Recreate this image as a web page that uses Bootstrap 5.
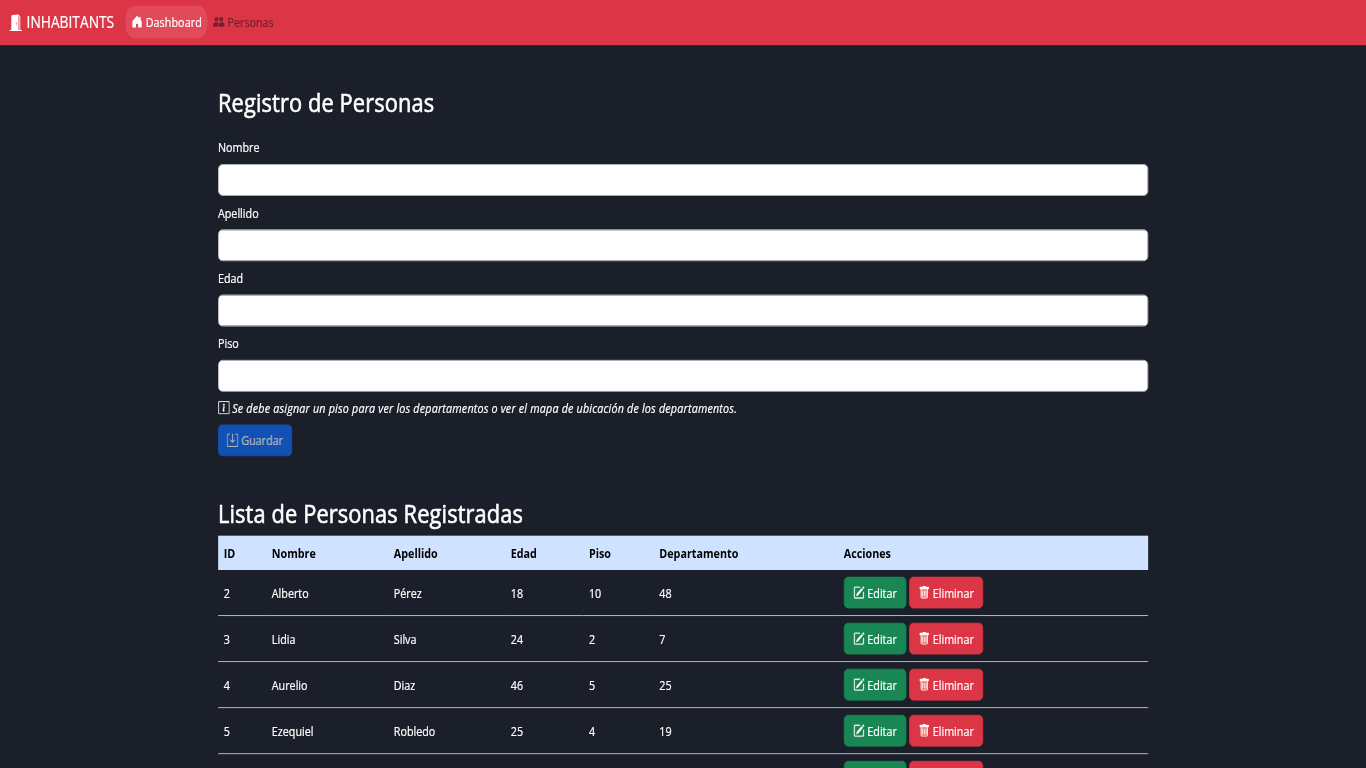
<!DOCTYPE html>
<html lang="es">
<head>
<meta charset="utf-8">
<title>Inhabitants</title>
<link href="https://cdn.jsdelivr.net/npm/bootstrap@5.3.0/dist/css/bootstrap.min.css" rel="stylesheet">
<style>
html,body{height:100%;overflow:hidden;background:#1b1f29}
body{font-family:"Open Sans","Noto Sans",sans-serif;color:#fff}
.viewport{width:100vw;height:100vh;overflow:hidden;contain:strict}
.stage{width:1903.5px;height:917.5px;overflow:hidden;transform:scale(.7176,.837);transform-origin:0 0;font-size:15px;line-height:24px;-webkit-text-stroke:.25px currentColor}
.topbar{height:53.5px;padding:0;background:#dc3545}
.topbar .navbar-brand{font-size:19.200px;margin-right:16px;padding:0;color:#fff}
.topbar .nav-link{padding:8px;line-height:22.600px;color:#74202e}
.topbar .nav-link.active{background:#e04a59;color:#fff;border-radius:14px}
.topbar .nav-link .t{letter-spacing:-.05px}
.topbar .nav-link.active .t{letter-spacing:.1px}
.page-box{width:1320px;max-width:1320px}
h2{font-size:30.400px;line-height:38.4px;font-weight:500;-webkit-text-stroke:.7px currentColor;letter-spacing:.17px}
.title-form{margin:50px 0 22px}
.title-list{margin:49.600px 0 6.400px}
.form-control{height:38px}
.form-group{margin-bottom:7.900px}
.note .t{letter-spacing:.245px}
.stage .btn{font-size:15px;line-height:24px;padding:6px 0;white-space:nowrap}
.save,.del{width:103px}
.edit{width:87px}
.acts{gap:4.200px}
svg{width:16px;height:16px;fill:currentColor;vertical-align:-2px}
.topbar .navbar-brand svg{width:20px;height:20px;vertical-align:-3px}
.people-table{table-layout:fixed;color:#fff;margin:0;background:linear-gradient(#cfe2ff 41px,transparent 41px)}
.people-table>:not(caption)>*>*{padding:8px;background:transparent;color:#fff;border-bottom:1.6px solid #d2d5da;box-shadow:none}
.people-table>thead>tr>th{color:#000;border:0;height:41px;-webkit-text-stroke:0}
.people-table td{height:55px;vertical-align:middle}
.w-id{width:67px}.w-name{width:170px}.w-last{width:163px}.w-age{width:109px}.w-floor{width:98px}.w-dept{width:257px}
.t{white-space:nowrap}
</style>
</head>
<body>
<div class="viewport">
<div class="stage">
<nav class="navbar navbar-expand topbar">
 <div class="container-fluid justify-content-start">
  <a class="navbar-brand" href="#"><svg viewBox="0 0 16 16"><path d="M1.5 15a.5.5 0 0 0 0 1h13a.5.5 0 0 0 0-1H13V2.5A1.5 1.5 0 0 0 11.5 1H11V.5a.5.5 0 0 0-.57-.495l-7 1A.5.5 0 0 0 3 1.5V15H1.5zM11 2h.5a.5.5 0 0 1 .5.5V15h-1V2zm-2.5 8c-.276 0-.5-.448-.5-1s.224-1 .5-1 .5.448.5 1-.224 1-.5 1z"/></svg> <span class="t">INHABITANTS</span></a>
  <div class="navbar-nav">
   <a class="nav-link active" href="#"><svg viewBox="0 0 16 16"><path d="M6.5 14.5v-3.505c0-.245.25-.495.5-.495h2c.25 0 .5.25.5.5v3.5a.5.5 0 0 0 .5.5h4a.5.5 0 0 0 .5-.5v-7a.5.5 0 0 0-.146-.354L13 5.793V2.5a.5.5 0 0 0-.5-.5h-1a.5.5 0 0 0-.5.5v1.293L8.354 1.146a.5.5 0 0 0-.708 0l-6 6A.5.5 0 0 0 1.5 7.5v7a.5.5 0 0 0 .5.5h4a.5.5 0 0 0 .5-.5z"/></svg> <span class="t">Dashboard</span></a>
   <a class="nav-link" href="#"><svg viewBox="0 0 16 16"><circle cx="4.700" cy="5" r="2.700"/><circle cx="11.300" cy="5" r="2.700"/><path d="M0 14v-2c0-2 1.600-3.300 3.500-3.300h2.400c.8 0 1.400.3 1.900.8C6.700 10.500 6.200 12 6.200 14zM7.200 14c0-3.300 1.700-5.300 4-5.300h1.300c2 0 3.500 1.500 3.500 3.400V14z"/></svg> <span class="t">Personas</span></a>
  </div>
 </div>
</nav>
<main class="container page-box">
 <h2 class="title-form"><span class="t">Registro de Personas</span></h2>
 <form>
  <div class="form-group"><label class="d-block mb-2" for="nombre">Nombre</label><input class="form-control" id="nombre"></div>
  <div class="form-group"><label class="d-block mb-2" for="apellido">Apellido</label><input class="form-control" id="apellido"></div>
  <div class="form-group"><label class="d-block mb-2" for="edad">Edad</label><input class="form-control" id="edad"></div>
  <div class="form-group"><label class="d-block mb-2" for="piso">Piso</label><input class="form-control" id="piso"></div>
  <div class="form-group fst-italic note"><svg viewBox="0 0 16 16"><path stroke="currentColor" stroke-width=".4" d="M14 1a1 1 0 0 1 1 1v12a1 1 0 0 1-1 1H2a1 1 0 0 1-1-1V2a1 1 0 0 1 1-1h12zM2 0a2 2 0 0 0-2 2v12a2 2 0 0 0 2 2h12a2 2 0 0 0 2-2V2a2 2 0 0 0-2-2H2z"/><path stroke="currentColor" stroke-width=".5" d="m8.93 6.588-2.29.287-.082.38.45.083c.294.07.352.176.288.469l-.738 3.468c-.194.897.105 1.319.808 1.319.545 0 1.178-.252 1.465-.598l.088-.416c-.2.176-.492.246-.686.246-.275 0-.375-.193-.304-.533L8.93 6.588zM9 4.5a1 1 0 1 1-2 0 1 1 0 0 1 2 0z"/></svg> <span class="t">Se debe asignar un piso para ver los departamentos o ver el mapa de ubicación de los departamentos.</span></div>
  <button class="btn btn-primary d-block save" type="button" disabled><svg viewBox="0 0 16 16"><path stroke="currentColor" stroke-width=".3" d="M4.500 1H2a1 1 0 0 0-1 1v12a1 1 0 0 0 1 1h12a1 1 0 0 0 1-1V2a1 1 0 0 0-1-1h-2.500V0H14a2 2 0 0 1 2 2v12a2 2 0 0 1-2 2H2a2 2 0 0 1-2-2V2a2 2 0 0 1 2-2h2.500z"/><path d="M8 0v10.300M4.700 7.200 8 10.500l3.300-3.300" fill="none" stroke="currentColor" stroke-width="1.300"/></svg> <span class="t">Guardar</span></button>
 </form>
 <h2 class="title-list"><span class="t">Lista de Personas Registradas</span></h2>
 <table class="table people-table">
  <colgroup><col class="w-id"><col class="w-name"><col class="w-last"><col class="w-age"><col class="w-floor"><col class="w-dept"><col></colgroup>
  <thead><tr><th>ID</th><th>Nombre</th><th>Apellido</th><th>Edad</th><th>Piso</th><th>Departamento</th><th>Acciones</th></tr></thead>
  <tbody id="rows"></tbody>
 </table>
</main>
</div>
</div>
<script src="https://cdn.jsdelivr.net/npm/bootstrap@5.3.0/dist/js/bootstrap.bundle.min.js"></script>
<script>
const edit='<svg viewBox="0 0 16 16"><path d="M15.502 1.940a.5.5 0 0 1 0 .706L14.459 3.690l-2-2L13.502.646a.5.5 0 0 1 .707 0l1.293 1.293zm-1.750 2.456-2-2L4.939 9.210a.5.5 0 0 0-.121.196l-.805 2.414a.25.25 0 0 0 .316.316l2.414-.805a.5.5 0 0 0 .196-.12l6.813-6.814z"/><path fill-rule="evenodd" stroke="currentColor" stroke-width=".4" d="M1 13.500A1.500 1.500 0 0 0 2.500 15h11a1.500 1.500 0 0 0 1.500-1.500v-6a.5.5 0 0 0-1 0v6a.5.5 0 0 1-.5.5h-11a.5.5 0 0 1-.5-.5v-11a.5.5 0 0 1 .5-.5H9a.5.5 0 0 0 0-1H2.500A1.500 1.500 0 0 0 1 2.500v11z"/></svg>';
const trash='<svg viewBox="0 0 16 16"><path fill="#ffd9b0" fill-opacity=".5" d="M3 4h10v10H3z"/><path d="M5.500 5.500A.5.5 0 0 1 6 6v6a.5.5 0 0 1-1 0V6a.5.5 0 0 1 .5-.5zm2.500 0a.5.5 0 0 1 .5.5v6a.5.5 0 0 1-1 0V6a.5.5 0 0 1 .5-.5zm3 .5a.5.5 0 0 0-1 0v6a.5.5 0 0 0 1 0V6z"/><path fill-rule="evenodd" d="M14.500 3a1 1 0 0 1-1 1H13v9a2 2 0 0 1-2 2H5a2 2 0 0 1-2-2V4h-.5a1 1 0 0 1-1-1V2a1 1 0 0 1 1-1H6a1 1 0 0 1 1-1h2a1 1 0 0 1 1 1h3.500a1 1 0 0 1 1 1v1zM4.118 4 4 4.059V13a1 1 0 0 0 1 1h6a1 1 0 0 0 1-1V4.059L11.882 4H4.118z"/></svg>';
const people=[[2,'Alberto','Pérez',18,10,48],[3,'Lidia','Silva',24,2,7],[4,'Aurelio','Diaz',46,5,25],[5,'Ezequiel','Robledo',25,4,19],['','','','','','']];
const button=(cls,icon,label)=>`<button class="btn ${cls}">${icon} <span class="t">${label}</span></button>`;
document.getElementById('rows').innerHTML=people.map(p=>'<tr>'+p.map(v=>`<td>${v}</td>`).join('')+`<td><div class="d-flex acts">${button('btn-success edit',p[0]?edit:'',p[0]?'Editar':'&nbsp;')}${button('btn-danger del',p[0]?trash:'',p[0]?'Eliminar':'&nbsp;')}</div></td></tr>`).join('');
</script>
</body>
</html>
